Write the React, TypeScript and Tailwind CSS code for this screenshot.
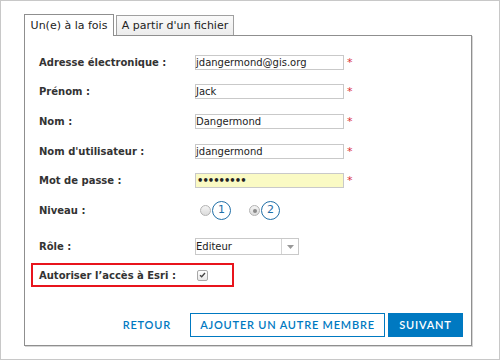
const verdana = { fontFamily: '"DejaVu Sans", Verdana, sans-serif' }

function Req() {
  return <span className="ml-[3px] text-[11px] leading-none text-[#d9323a]">*</span>
}

function TextRow({ label, value, h, pw }: { label: string; value: string; h: string; pw?: boolean }) {
  return (
    <div className={`flex items-center pl-[8px] ${h}`}>
      <div className="w-[156px] shrink-0 text-[10px] font-bold text-[#333]">{label}</div>
      <div
        className={`flex h-[15px] w-[149px] items-center border border-[#c9c9c9] text-[10px] text-[#222] ${
          pw ? "bg-[#fafac4] pl-[1px] font-bold tracking-[-1px]" : "bg-white"
        }`}
      >
        {value}
      </div>
      <Req />
    </div>
  )
}

function Radio({ checked, n }: { checked?: boolean; n: string }) {
  return (
    <div className="flex items-center gap-[1px]">
      <span className="flex h-[11px] w-[11px] items-center justify-center rounded-full border border-[#b3b3b3] bg-gradient-to-b from-[#f4f4f4] to-[#dcdcdc]">
        {checked && <span className="h-[4px] w-[4px] rounded-full bg-[#8a8a8a]" />}
      </span>
      <span className="flex h-[19px] w-[19px] items-center justify-center rounded-full border-[1.5px] border-[#1f6ea6] text-[11px] text-[#1f6ea6]">
        {n}
      </span>
    </div>
  )
}

export default function App() {
  return (
    <div className="h-[360px] w-[500px] border border-[#c8c8c8] bg-white" style={verdana}>
      <div className="ml-[23px] mt-[13px] w-[448px]">
        {/* tabs */}
        <div className="relative z-10 flex items-end gap-[2px]">
          <div className="-mb-px h-[22px] w-[90px] border border-b-0 border-[#8f8f8f] bg-white pt-[3px] text-center text-[11px] text-[#222]">
            Un(e) à la fois
          </div>
          <div className="h-[20px] w-[118px] border border-b-0 border-[#a0a0a0] bg-gradient-to-b from-[#fafafa] to-[#ececec] pt-[2px] text-center text-[11px] text-[#222]">
            A partir d'un fichier
          </div>
        </div>

        {/* panel */}
        <div className="h-[311px] border border-[#8f8f8f] px-[6px] pt-[11px] shadow-[1px_1px_0_#d6d6d6]">
          <TextRow label="Adresse électronique :" value="jdangermond@gis.org" h="h-[30px]" />
          <TextRow label="Prénom :" value="Jack" h="h-[29px]" />
          <TextRow label="Nom :" value="Dangermond" h="h-[30px]" />
          <TextRow label="Nom d'utilisateur :" value="jdangermond" h="h-[30px]" />
          <TextRow label="Mot de passe :" value="•••••••••" h="h-[29px]" pw />

          <div className="flex h-[31px] items-center pl-[8px]">
            <div className="w-[156px] shrink-0 text-[10px] font-bold text-[#333]">Niveau :</div>
            <div className="flex items-center gap-[18px] pl-[5px]">
              <Radio n="1" />
              <Radio n="2" checked />
            </div>
          </div>

          <div className="flex h-[37px] items-center pl-[8px] pt-[4px]">
            <div className="w-[156px] shrink-0 text-[10px] font-bold text-[#333]">Rôle :</div>
            <div className="flex h-[17px] w-[104px] items-center border border-[#c9c9c9] bg-white text-[10px] text-[#222]">
              <span className="flex-1">Editeur</span>
              <span className="flex h-full w-[17px] items-center justify-center border-l border-[#d4d4d4]">
                <svg width="7" height="4" viewBox="0 0 7 4">
                  <path d="M0 0h7L3.5 4z" fill="#999" />
                </svg>
              </span>
            </div>
          </div>

          <div className="flex h-[24px] w-[203px] items-center border-2 border-[#e8141c] pl-[6px]">
            <div className="w-[158px] shrink-0 text-[10px] font-bold text-[#333]">Autoriser l’accès à Esri :</div>
            <span className="flex h-[11px] w-[11px] items-center justify-center rounded-[2px] border border-[#a8a8a8] bg-gradient-to-b from-white to-[#e8e8e8]">
              <svg width="7" height="6" viewBox="0 0 7 6">
                <path d="M1 3.2l1.7 1.6L6 1" stroke="#444" strokeWidth="1.3" fill="none" />
              </svg>
            </span>
          </div>

          <div
            className="mt-[26px] flex items-center justify-end gap-[3px] pr-[2px] text-[11px] font-semibold tracking-[0.8px] text-[#0079c1]"
            style={{ fontFamily: 'Lato, "Open Sans", sans-serif' }}
          >
            <span className="mr-[16px]">RETOUR</span>
            <span className="flex h-[24px] w-[195px] items-center justify-center border border-[#0079c1] bg-white">
              AJOUTER UN AUTRE MEMBRE
            </span>
            <span className="flex h-[24px] w-[75px] items-center justify-center bg-[#0079c1] text-white">SUIVANT</span>
          </div>
        </div>
      </div>
    </div>
  )
}
